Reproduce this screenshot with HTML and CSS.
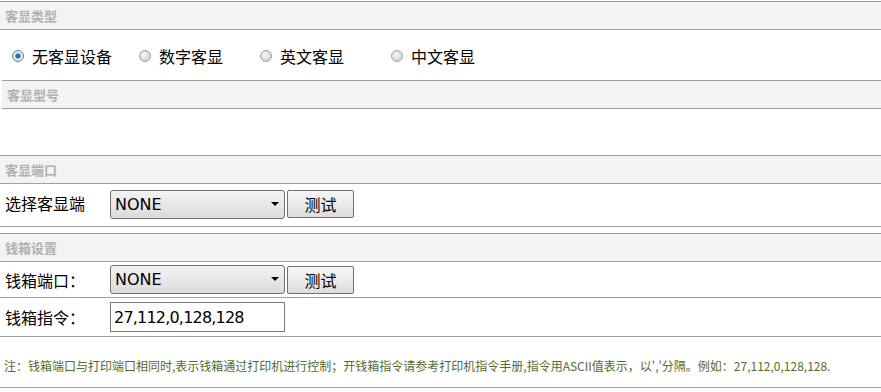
FILE: index.html
```html
<!DOCTYPE html>
<html lang="zh-CN">
<head>
    <meta charset="UTF-8">
    <title>客显设置</title>
    <link rel="stylesheet" href="styles.css">
</head>
<body>
    <div class="panel">
        <div class="section-title">客显类型</div>
        <div class="radio-row">
            <label class="radio-item"><input type="radio" name="dtype" checked><span>无客显设备</span></label>
            <label class="radio-item"><input type="radio" name="dtype"><span>数字客显</span></label>
            <label class="radio-item"><input type="radio" name="dtype"><span>英文客显</span></label>
            <label class="radio-item"><input type="radio" name="dtype"><span>中文客显</span></label>
        </div>
        <div class="section-title indent">客显型号</div>
        <div class="empty-row"></div>
        <div class="section-title">客显端口</div>
        <div class="form-row tall">
            <span class="label">选择客显端</span>
            <span class="select-wrap"><select><option>NONE</option></select></span>
            <button class="btn">测试</button>
        </div>
    </div>

    <div class="panel second">
        <div class="section-title">钱箱设置</div>
        <div class="form-row">
            <span class="label">钱箱端口：</span>
            <span class="select-wrap"><select><option>NONE</option></select></span>
            <button class="btn">测试</button>
        </div>
        <div class="form-row cmd">
            <span class="label">钱箱指令：</span>
            <input class="text-input" type="text" value="27,112,0,128,128">
        </div>
        <div class="note">注：钱箱端口与打印端口相同时,表示钱箱通过打印机进行控制；开钱箱指令请参考打印机指令手册,指令用ASCII值表示，以','分隔。例如：27,112,0,128,128.</div>
    </div>
</body>
</html>
```

FILE: styles.css
```css
body {
    margin: 0;
    padding-top: 1px;
    font-family: "Noto Sans CJK SC", "Liberation Sans", sans-serif;
    color: #000;
    background: #fff;
}

.panel {
    border-bottom: 1px solid #a0a0a0;
}

.panel.second {
    margin-top: 6px;
}

.section-title {
    height: 27px;
    line-height: 27px;
    background: #f3f3f3;
    border-top: 1px solid #a0a0a0;
    border-bottom: 1px solid #a0a0a0;
    padding-left: 5px;
    font-size: 13px;
    font-weight: bold;
    color: #b0b0b0;
}

.section-title.indent {
    margin-left: 2px;
    padding-left: 5px;
}

.radio-row {
    height: 50px;
    display: flex;
    align-items: center;
    padding-left: 12px;
    padding-top: 1px;
    box-sizing: border-box;
}

.radio-item {
    display: flex;
    align-items: center;
    font-size: 16px;
    width: 127px;
}

.radio-item:nth-child(2) {
    width: 121px;
}

.radio-item:nth-child(3) {
    width: 131px;
}

.radio-item input {
    appearance: none;
    -webkit-appearance: none;
    width: 12px;
    height: 12px;
    margin: 0 8px 0 0;
    border: 1px solid #a0a0a0;
    border-radius: 50%;
    background: radial-gradient(circle at 40% 40%, #f6f6f6 0%, #d6d6d6 70%);
    box-sizing: border-box;
}

.radio-item input:checked {
    border-color: #6f7f90;
    background: radial-gradient(circle, #1f5f9f 0%, #2a7fc8 30%, #e6eef5 45%, #d8d8d8 100%);
}

.empty-row {
    height: 46px;
}

.form-row {
    display: flex;
    align-items: center;
    height: 35px;
    padding-left: 5px;
    border-bottom: 1px solid #a0a0a0;
}

.form-row.cmd {
    height: 38px;
}

.form-row.tall {
    height: 42px;
    border-bottom: none;
    align-items: flex-start;
}

.form-row.tall .label {
    margin-top: 7px;
}

.form-row.tall .select-wrap,
.form-row.tall .btn {
    margin-top: 6px;
}

.label {
    width: 105px;
    font-size: 16px;
}

.select-wrap {
    position: relative;
    display: inline-block;
}

.select-wrap::after {
    content: "";
    position: absolute;
    right: 6px;
    top: 12px;
    border-left: 4px solid transparent;
    border-right: 4px solid transparent;
    border-top: 4px solid #000;
    pointer-events: none;
}

select {
    appearance: none;
    -webkit-appearance: none;
    width: 175px;
    height: 29px;
    padding: 0 0 0 4px;
    border: 1px solid #707070;
    border-radius: 3px;
    background: linear-gradient(#f3f3f3, #e8e8e8 50%, #dadada);
    font-family: "DejaVu Sans", sans-serif;
    font-size: 16px;
    color: #000;
}

.btn {
    width: 67px;
    height: 28px;
    margin-left: 2px;
    border: 1px solid #707070;
    border-radius: 2px;
    background: linear-gradient(#f6f6f6, #ebebeb 50%, #dcdcdc);
    font-family: "Noto Sans CJK SC", sans-serif;
    font-size: 16px;
    color: #000;
    padding: 0;
}

.text-input {
    width: 175px;
    height: 30px;
    box-sizing: border-box;
    border: 1px solid #7a7a7a;
    padding: 0 3px;
    font-family: "DejaVu Sans", sans-serif;
    font-size: 16px;
    letter-spacing: -0.8px;
    color: #000;
}

.note {
    height: 50px;
    line-height: 58px;
    padding-left: 4px;
    font-size: 12px;
    color: #556b2f;
    white-space: nowrap;
}
```
